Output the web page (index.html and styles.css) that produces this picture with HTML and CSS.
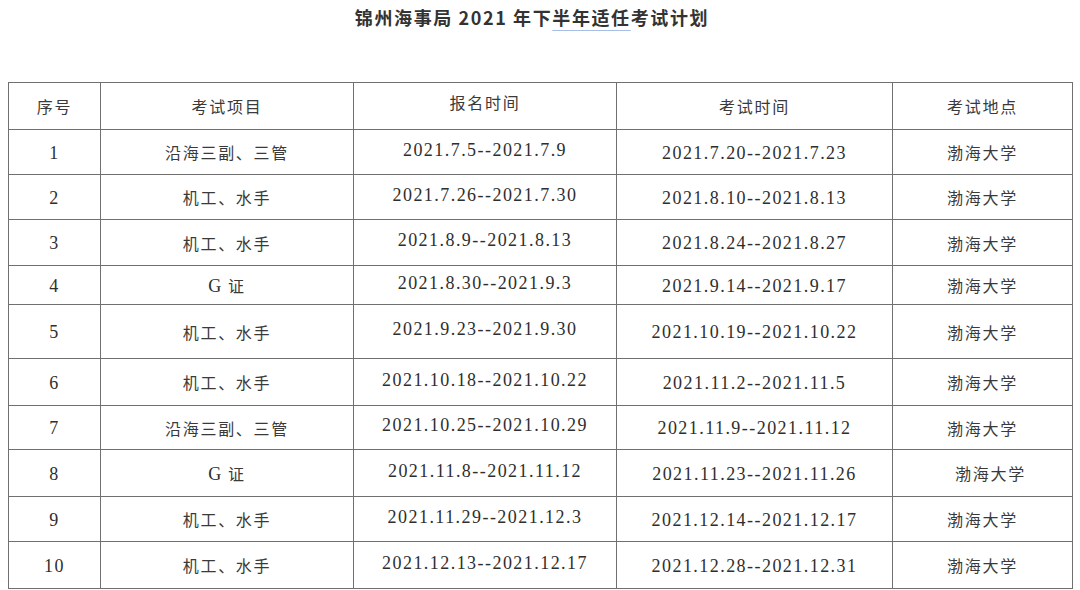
FILE: index.html
```html
<!DOCTYPE html>
<html lang="zh-CN">
<head>
<meta charset="utf-8">
<title>锦州海事局 2021 年下半年适任考试计划</title>
<link rel="stylesheet" href="styles.css">
</head>
<body>
<h1 class="title">锦州海事局 2021 年下<span class="mark">半年适任</span>考试计划</h1>
<table class="plan">
  <colgroup>
    <col class="c1"><col class="c2"><col class="c3"><col class="c4"><col class="c5">
  </colgroup>
  <thead>
    <tr class="h47">
      <th>序号</th><th>考试项目</th><th class="up-head">报名时间</th><th>考试时间</th><th>考试地点</th>
    </tr>
  </thead>
  <tbody>
    <tr class="h45"><td><span class="d">1</span></td><td>沿海三副、三管</td><td class="up"><span class="d">2021.7.5--2021.7.9</span></td><td><span class="d">2021.7.20--2021.7.23</span></td><td>渤海大学</td></tr>
    <tr class="h45"><td><span class="d">2</span></td><td>机工、水手</td><td class="up"><span class="d">2021.7.26--2021.7.30</span></td><td><span class="d">2021.8.10--2021.8.13</span></td><td>渤海大学</td></tr>
    <tr class="h46"><td><span class="d">3</span></td><td>机工、水手</td><td class="up"><span class="d">2021.8.9--2021.8.13</span></td><td><span class="d">2021.8.24--2021.8.27</span></td><td>渤海大学</td></tr>
    <tr class="h39"><td><span class="d">4</span></td><td><span class="d">G</span> 证</td><td class="up"><span class="d">2021.8.30--2021.9.3</span></td><td><span class="d">2021.9.14--2021.9.17</span></td><td>渤海大学</td></tr>
    <tr class="h54"><td><span class="d">5</span></td><td>机工、水手</td><td class="up"><span class="d">2021.9.23--2021.9.30</span></td><td><span class="d">2021.10.19--2021.10.22</span></td><td>渤海大学</td></tr>
    <tr class="h47"><td><span class="d">6</span></td><td>机工、水手</td><td class="up"><span class="d">2021.10.18--2021.10.22</span></td><td><span class="d">2021.11.2--2021.11.5</span></td><td>渤海大学</td></tr>
    <tr class="h44"><td><span class="d">7</span></td><td>沿海三副、三管</td><td class="up"><span class="d">2021.10.25--2021.10.29</span></td><td><span class="d">2021.11.9--2021.11.12</span></td><td>渤海大学</td></tr>
    <tr class="h47"><td><span class="d">8</span></td><td><span class="d">G</span> 证</td><td class="up"><span class="d">2021.11.8--2021.11.12</span></td><td><span class="d">2021.11.23--2021.11.26</span></td><td class="shift">渤海大学</td></tr>
    <tr class="h45"><td><span class="d">9</span></td><td>机工、水手</td><td class="up"><span class="d">2021.11.29--2021.12.3</span></td><td><span class="d">2021.12.14--2021.12.17</span></td><td>渤海大学</td></tr>
    <tr class="h47"><td><span class="d">10</span></td><td>机工、水手</td><td class="up"><span class="d">2021.12.13--2021.12.17</span></td><td><span class="d">2021.12.28--2021.12.31</span></td><td>渤海大学</td></tr>
  </tbody>
</table>
</body>
</html>
```
FILE: styles.css
```css
html, body {
  margin: 0;
  padding: 0;
  background: #ffffff;
}

body {
  font-family: "Noto Sans CJK SC", "Liberation Sans", sans-serif;
  color: #333333;
}

.title {
  margin: 0;
  height: 82px;
  padding-top: 4px;
  padding-right: 16px;
  box-sizing: border-box;
  font-size: 18px;
  line-height: 26px;
  font-weight: 700;
  letter-spacing: 1.6px;
  text-align: center;
  color: #333333;
}

.mark {
  text-decoration: underline;
  text-decoration-color: #a9bde9;
  text-decoration-thickness: 1px;
  text-underline-offset: 5px;
}

.plan {
  margin-left: 8px;
  width: 1064px;
  border-collapse: collapse;
  table-layout: fixed;
  border: 1px solid #6f6f6f;
}

.c1 { width: 92px; }
.c2 { width: 253px; }
.c3 { width: 263px; }
.c4 { width: 276px; }
.c5 { width: 180px; }

.plan th,
.plan td {
  border: 1px solid #707070;
  padding: 0;
  text-align: center;
  vertical-align: middle;
  font-size: 16px;
  font-weight: 400;
  letter-spacing: 1.7px;
  color: #3a3a3a;
  line-height: 20px;
}

.plan .up {
  padding-bottom: 6px;
}

.plan .up-head {
  padding-bottom: 9px;
}

.plan .shift {
  padding-left: 16px;
}

.d {
  font-family: "Liberation Serif", "DejaVu Serif", serif;
  font-size: 18px;
  letter-spacing: 1.45px;
  color: #2e2e2e;
}

.h39 { height: 39px; }
.h44 { height: 44px; }
.h45 { height: 45px; }
.h46 { height: 46px; }
.h47 { height: 47px; }
.h54 { height: 54px; }
```
